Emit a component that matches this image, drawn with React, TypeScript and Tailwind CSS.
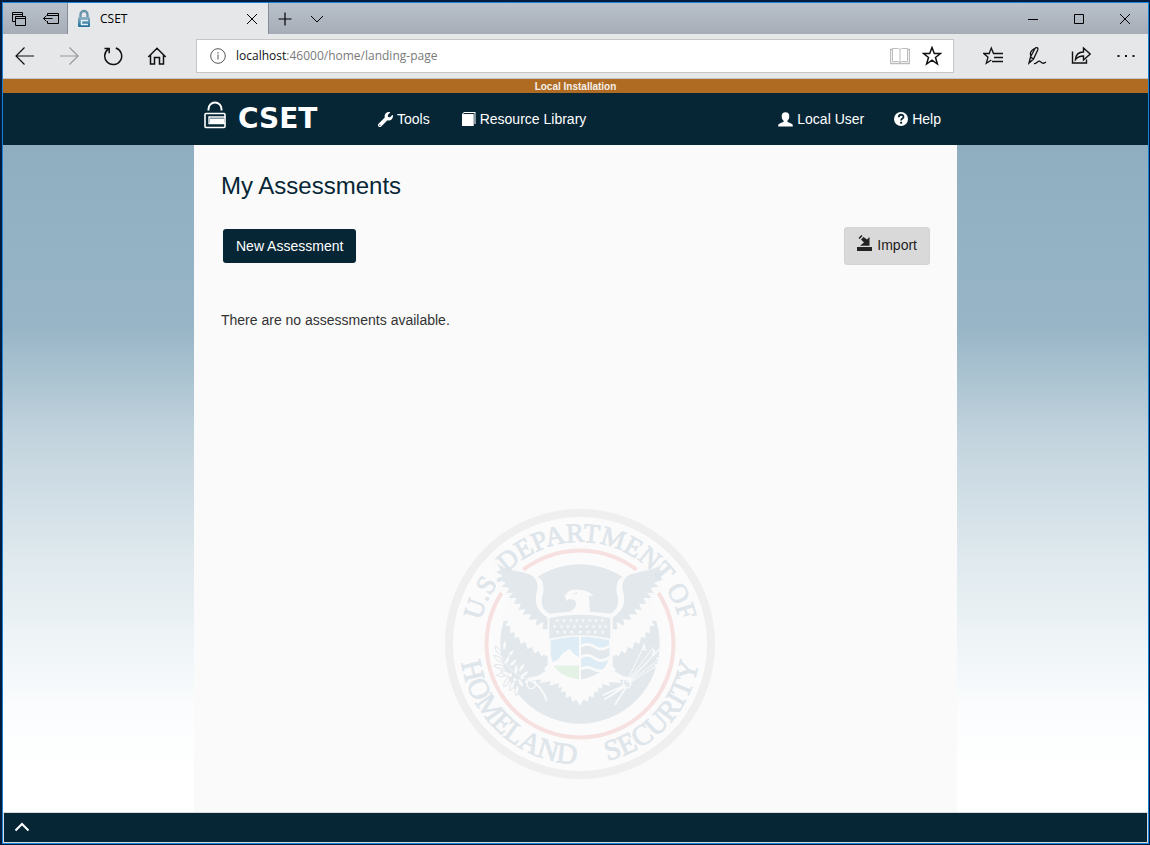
import React from "react";
import { FaWrench } from "react-icons/fa";

type IconProps = { children: React.ReactNode; size?: string; box?: string; width?: number };

function Line({ children, size = "size-5", box = "0 0 20 20", width = 1.2 }: IconProps) {
  return (
    <svg className={size} viewBox={box} fill="none" stroke="currentColor" strokeWidth={width} aria-hidden="true">
      {children}
    </svg>
  );
}

function TabStrip() {
  return (
    <div className="flex h-[31px] items-stretch bg-linear-to-b from-[#b9c1cb] to-[#a6adb6] text-black">
      <div className="flex w-[65px] shrink-0 items-center justify-between border-r border-[#858c95] pr-1.5 pl-1.5">
        <button aria-label="Tabs you've set aside">
          <Line width={1}>
            <path d="M3.500 3.500h10v9h-10zM3.500 5.500h10" />
            <path d="M6.500 7.500h10v9h-10z" fill="#b0b8c2" />
            <path d="M6.500 9.500h10" />
          </Line>
        </button>
        <button aria-label="Set these tabs aside">
          <Line width={1}>
            <path d="M6.500 7V4.500h11v10h-11V12M6.500 6.500h11M2.500 9.500h9M5.500 6.500l-3 3 3 3" />
          </Line>
        </button>
      </div>
      <div className="flex w-[200px] items-center gap-2 bg-[#e6e7e9] pr-1.5 pl-2">
        <svg className="h-5 w-4 shrink-0" viewBox="0 0 16 20" aria-hidden="true">
          <defs>
            <linearGradient id="favicon" x1="0" y1="0" x2="0" y2="1">
              <stop offset="0" stopColor="#8fb3c4" />
              <stop offset="1" stopColor="#1b6d97" />
            </linearGradient>
          </defs>
          <path d="M4.500 10V5.500a3.500 3.500 0 0 1 7 0V10" fill="none" stroke="#6a94a9" strokeWidth="2.400" />
          <rect x="2" y="8" width="12" height="10" rx="1" fill="url(#favicon)" />
          <path d="M12 11.500H5.500v4H12" fill="none" stroke="#e4f2f9" strokeWidth="1.500" />
        </svg>
        <span className="flex-1 text-[12px]">CSET</span>
        <button aria-label="Close tab">
          <Line width={1}><path d="M5 5l10 10M15 5L5 15" /></Line>
        </button>
      </div>
      <div className="flex flex-1 items-center gap-3 border-l border-[#858c95] pl-1.5">
        <button aria-label="New tab">
          <Line><path d="M10 3.500v13M3.500 10h13" /></Line>
        </button>
        <button aria-label="Show tab previews">
          <Line width={1}><path d="M4 7l6 6 6-6" /></Line>
        </button>
      </div>
      <div className="flex items-stretch">
        <button className="flex w-[46px] items-center justify-center" aria-label="Minimize">
          <Line width={1}><path d="M5 10.500h10" /></Line>
        </button>
        <button className="flex w-[46px] items-center justify-center" aria-label="Maximize">
          <Line width={1}><path d="M5.500 5.500h9v9h-9z" /></Line>
        </button>
        <button className="flex w-[46px] items-center justify-center" aria-label="Close">
          <Line width={1}><path d="M5 5l10 10M15 5L5 15" /></Line>
        </button>
      </div>
    </div>
  );
}

const starPath = "M10 1.500l2.300 6h6.200l-5 4 1.900 6.500L10 14.200 4.600 18l1.900-6.500-5-4h6.200z";

function AddressBar() {
  return (
    <div className="flex h-[45px] items-center border-b border-[#c3c5c9] bg-[#e6e7e9] text-[#111]">
      <div className="flex w-[193px] shrink-0 items-center">
        <button className="flex w-11 justify-center" aria-label="Back">
          <Line><path d="M1 10h18M9.500 1.500L1 10l8.500 8.500" /></Line>
        </button>
        <button className="flex w-11 justify-center text-[#999]" aria-label="Forward">
          <Line><path d="M1 10h18M10.500 1.500L19 10l-8.500 8.500" /></Line>
        </button>
        <button className="flex w-11 justify-center" aria-label="Refresh">
          <Line width={1.5}><path d="M5.200 3.200A8.500 8.500 0 1 0 12.800 2M1.500 2.500h4.700v4.700" /></Line>
        </button>
        <button className="flex w-11 justify-center" aria-label="Home">
          <Line width={1.5}><path d="M1.300 11L10 2.200l8.700 8.800M3.500 9.300V18h4v-6.500h5V18h4V9.300" /></Line>
        </button>
      </div>
      <div className="flex h-[34px] flex-1 items-center border border-[#c6c6c6] bg-white px-[11px]">
        <button className="mr-2 text-[#555]" aria-label="Site information">
          <Line width={1}><circle cx="10" cy="10" r="7.300" /><path d="M10 8.500v5M10 6v1.500" /></Line>
        </button>
        <label htmlFor="address" className="text-[12px]">localhost</label>
        <input
          id="address"
          className="min-w-0 flex-1 bg-transparent text-[12px] text-[#7a7a7a] outline-none"
          defaultValue=":46000/home/landing-page"
        />
        <button className="mr-3 text-[#bcbcbc]" aria-label="Reading view">
          <Line width={1}>
            <path d="M2.500 3.500h-2v14h19v-14h-2" strokeWidth="1.400" />
            <path d="M2.500 15.500V2.500h5c1.500 0 2.500.5 2.500 1.500 0-1 1-1.500 2.500-1.500h5v13h-5c-1.500 0-2.500.5-2.500 1 0-.5-1-1-2.500-1zM10 4v13" />
          </Line>
        </button>
        <button aria-label="Add to favorites">
          <Line width={1.5}><path d={starPath} /></Line>
        </button>
      </div>
      <div className="flex shrink-0 pl-[17px]">
        <button className="flex w-11 justify-center" aria-label="Favorites">
          <Line width={1.3}><path d="M14.500 7.500h-4L8.300 2 6.200 7.500H.8L5 11.300l-1.700 6L8.300 14M11 7.500h9M11 11.500h9M9 15.500h11" /></Line>
        </button>
        <button className="flex w-11 justify-center" aria-label="Add notes">
          <Line width={1.3}><path d="M2 17l1.500-6L8 2.500c1-1.800 3.500-.7 2.800 1.200L6.500 13zM4 10.500c-2-3.500 1-6.500 3.500-8M3.500 11l3 2M7 17.500c3 .5 4-4 6.500-1.800 1.500 2 3.500 2 5.500.3" /></Line>
        </button>
        <button className="flex w-11 justify-center" aria-label="Share">
          <Line width={1.4}><path d="M1.500 5.500V17h14v-3.500M4.500 13.500c.3-4.500 3-7.500 8-7.500V2l6.700 6-6.700 6v-4c-4 0-6 1-8 3.500z" /></Line>
        </button>
        <button className="flex w-[45px] justify-center" aria-label="Settings and more">
          <Line><path d="M1.500 10h2M9 10h2M16.500 10h2" strokeWidth="2" /></Line>
        </button>
      </div>
    </div>
  );
}

function SiteNav() {
  return (
    <nav className="flex h-[52px] shrink-0 justify-center bg-[#062636] text-[14px] text-white">
      <div className="flex w-full max-w-[763px] items-center pr-4 pl-2.5">
        <a href="#home" className="flex w-[174px] items-center gap-3" aria-label="CSET home">
          <svg className="mb-2 h-7 w-[22px]" viewBox="0 0 22 28" fill="none" stroke="white" aria-hidden="true">
            <path d="M4.500 9.500V8a6.500 6.500 0 0 1 13 0v1.500" strokeWidth="2" />
            <rect x="1" y="12.500" width="20" height="14" rx="1" strokeWidth="1.600" />
            <path d="M21 16H5v6.500h16" strokeWidth="1.400" />
            <rect x="6" y="17.500" width="14" height="4.500" fill="white" stroke="none" />
          </svg>
          <span className="font-['DejaVu_Sans',sans-serif] text-[28px] leading-8 font-bold">CSET</span>
        </a>
        <button className="mr-[31px] flex items-center gap-1">
          <FaWrench className="size-[15px]" />
          Tools
        </button>
        <button className="flex items-center gap-1">
          <svg className="h-4 w-[15px]" viewBox="0 0 15 16" aria-hidden="true">
            <path d="M3 1H14.500v12h-1V2H3L1.800 3.200H12.500V15H1V3z" fill="white" />
            <path d="M1 3.200h11.500V15H1z" fill="white" />
          </svg>
          Resource Library
        </button>
        <button className="mr-[30px] ml-auto flex items-center gap-1">
          <svg className="size-[15px]" viewBox="0 0 15 15" fill="white" aria-hidden="true">
            <path d="M7.500.3c2.500 0 3.800 1.500 3.800 3.900 0 2-.8 3.700-1.900 4.500v1.100c0 .6 5.400 1.600 5.400 3.400v1.300H.2v-1.300c0-1.800 5.400-2.800 5.400-3.400V8.700C4.500 7.900 3.700 6.200 3.700 4.200 3.700 1.800 5 .3 7.500.3z" />
          </svg>
          Local User
        </button>
        <button className="flex items-center gap-1">
          <svg className="size-[14px]" viewBox="0 0 14 14" aria-hidden="true">
            <circle cx="7" cy="7" r="7" fill="white" />
            <path d="M4.700 5.200c0-3.200 4.800-3.200 4.800-.3C9.500 6.600 7.100 6.600 7.100 8.500" fill="none" stroke="#062636" strokeWidth="1.800" />
            <path d="M6.100 9.700h2v2h-2z" fill="#062636" />
          </svg>
          Help
        </button>
      </div>
    </nav>
  );
}

const starRows = [
  { y: 211, xs: [232, 252, 272, 290, 309, 329, 348, 367] },
  { y: 229, xs: [224, 245, 264, 283, 302, 321, 341, 360, 377] },
  { y: 246, xs: [233, 254, 275, 301, 325, 346, 368] },
];

const leaves = [
  [74, 286, 10], [55, 302, -35], [92, 310, 40], [55, 326, -55], [82, 330, 25], [100, 338, 45],
  [58, 350, -75], [125, 353, 35], [108, 358, 5], [66, 374, -100], [134, 372, 55], [80, 396, 30],
  [97, 406, 25], [111, 420, 10], [78, 370, -60], [122, 398, -30],
];

/* Left half of the eagle's wing; the right half is its mirror image. */
function Wing() {
  return (
    <>
      <path
        fill="#fafafa"
        d="M175 82C192 92 191 115 190 128 178 160 190 185 212 192V322L190 314 186 322 176 303 163 310 156 290 142 297 137 276 121 281 117 260 104 265 103 246 90 250 91 230 76 226 86 213 67 212 66 205 84 150 58 122 36 66 30 28 118 42 133 62Z"
      />
      <path
        fill="#e2e8ec"
        d="M50 39C75 62 115 62 145 72 175 83 175 108 170 128 160 165 178 187 203 203V236L188 239 190 216 172 226 166 225 171 207 146 210 153 192 129 194 136 178 115 180 123 162 101 161 110 144 86 144 98 128 78 129 89 115 64 109 78 99 51 86 68 78 49 65 62 60Z"
      />
    </>
  );
}

function Seal() {
  return (
    <svg className="mt-auto mb-8 ml-2 w-[272px] shrink-0 self-center" viewBox="444 508 272 272" role="img" aria-label="U.S. Department of Homeland Security seal">
      <defs>
        <path id="upper-arc" d="M478 644a102 102 0 0 1 204 0" />
        <path id="lower-arc" d="M460 644a120 120 0 0 0 240 0" />
      </defs>
      <circle cx="580" cy="644" r="131" fill="#fbfbfb" stroke="#efefef" strokeWidth="8" />
      <circle cx="580" cy="644" r="93.500" fill="none" stroke="#f6e0e0" strokeWidth="4" />
      <g transform="translate(480 550) scale(.33333)">
        <circle cx="300" cy="282" r="239" fill="#e2e8ec" />
        <Wing />
        <g transform="matrix(-1 0 0 1 600 0)"><Wing /></g>
        <path
          fill="#fafafa"
          d="M255 138C260 126 275 117 295 119 315 119 330 128 342 136L326 139C330 155 327 170 330 185Q365 188 398 192V348L408 360 402 362 428 378 455 384 450 390 418 389 425 399 386 396 391 408 366 402 368 416 355 412 355 427 343 424 341 443 328 437 323 455 311 448 300 467 289 449 277 456 272 438 258 444 257 424 244 427 246 411 235 414 237 400 208 407 213 394 178 399 186 389 150 390 145 383 173 378 197 362 191 357 203 345V192Q235 188 270 185C287 177 291 161 286 152 278 147 268 146 264 149L259 153Z"
        />
        <path d="M274 132l17-5 2 4-9 2z" fill="#e2e8ec" />
        <path d="M208 204Q300 184 391 204V266Q300 246 208 266Z" fill="#e2e8ec" />
        {starRows.flatMap((row) =>
          row.xs.map((x) => (
            <path
              key={`${x}-${row.y}`}
              transform={`translate(${x} ${row.y})`}
              d="M0-6L1.500-2H6L2.500 1 4 6 0 3-4 6-2.500 1-6-2H-1.500Z"
              fill="#fafafa"
            />
          )),
        )}
        <path d="M212 271Q250 261 297 260V388C250 380 215 355 212 310Z" fill="#deecf5" />
        <path d="M216 340L238 325 247 311 269 296 282 312 297 322V347H219Z" fill="#fafafa" />
        <path d="M220 347H297V388C260 382 237 370 220 347Z" fill="#e4f2e6" />
        <path d="M303 260Q350 261 388 271V310C388 352 355 380 303 388Z" fill="#deecf5" />
        <path d="M303 290q22-11 42 3t43-3v30q-22 12-43 0t-42 0ZM303 362q20-8 34 0 12 6 25-1-23 20-59 27Z" fill="#e2e8ec" />
        <path d="M303 288q22-11 42 3t43-3M303 321q22-11 42 4t43-3M303 357q22-11 42 3 20 6 37-2" fill="none" stroke="#fafafa" strokeWidth="8" />
        <g fill="#fafafa">
          {leaves.map(([x, y, turn]) => (
            <path
              key={`${x}-${y}`}
              transform={`translate(${x} ${y}) rotate(${turn})`}
              d="M0-17Q12 2 0 17-12 2 0-17Z"
              stroke="#e2e8ec"
              strokeWidth="3"
            />
          ))}
          <circle cx="91" cy="375" r="5" />
          <circle cx="104" cy="389" r="5" />
          <circle cx="126" cy="383" r="5" />
          <circle cx="140" cy="395" r="5" />
        </g>
        <g fill="none" stroke="#fafafa" strokeLinecap="round">
          <path d="M145 388Q185 405 200 451" strokeWidth="6" />
          <path d="M66 320Q78 362 145 390" strokeWidth="2" />
          <ellipse cx="154" cy="401" rx="13" ry="15" strokeWidth="4" />
          <ellipse cx="441" cy="399" rx="11" ry="15" strokeWidth="4" />
          <path d="M440 395L492 288M442 395L520 292M445 395L544 290M446 397L535 330M448 400L528 348M452 389L556 280" strokeWidth="3" />
          <path d="M435 405L370 435M435 410L374 448M438 412L406 462M433 406L390 439" strokeWidth="5" />
          <path d="M492 284l-5 14 10 2zM521 300l-3 15 10-4zM544 290l-5 17 12-5zM556 274l-8 18 8 3zM525 345l25-8M525 355l23-3M530 325l25-6" strokeWidth="4" />
        </g>
      </g>
      <g fill="#dfe6eb" stroke="#dfe6eb" strokeWidth=".8" className="font-['Liberation_Serif',serif]">
        <text fontSize="27" textAnchor="middle"><textPath href="#upper-arc" startOffset="50%">U.S. DEPARTMENT OF</textPath></text>
        <text fontSize="29"><textPath href="#lower-arc" startOffset="5%">HOMELAND</textPath></text>
        <text fontSize="29" textAnchor="end"><textPath href="#lower-arc" startOffset="95%">SECURITY</textPath></text>
      </g>
    </svg>
  );
}

export default function App() {
  return (
    <div className="flex min-h-screen flex-col border-t-2 border-r border-b border-l-2 border-[#031c3d] font-['Liberation_Sans',Arial,sans-serif]">
      <div className="flex flex-1 flex-col border border-[#1683d8]">
        <header className="font-['Open_Sans',sans-serif]">
          <TabStrip />
          <AddressBar />
        </header>
        <div className="h-3.5 bg-[#b06b22] text-center text-[10px] leading-[15px] font-bold text-[#f5f0ea]">Local Installation</div>
        <SiteNav />
        <div className="flex flex-1 justify-center bg-[linear-gradient(#8fafc1_0%,#97b5c6_27%,#c3d4de_44%,#dfe9ee_62%,#fafcfd_84%,#ffffff_94%)]">
          <main className="flex w-full max-w-[763px] flex-col bg-[#fafafa] px-[27px] pt-[26px] text-[14px] text-[#333]">
            <h1 className="text-[24px] leading-[30px] text-[#062636]">My Assessments</h1>
            <div className="mt-[26px] flex items-center justify-between pl-0.5">
              <button className="h-[34px] rounded-[3px] bg-[#062636] px-[13px] text-white">New Assessment</button>
              <button className="flex h-[38px] items-center gap-[5px] rounded-[3px] border border-[#d3d3d3] bg-[#d9d9d9] px-3 pb-0.5 text-[#222]">
                <svg className="mb-1 h-4 w-[15px]" viewBox="0 0 15 16" fill="currentColor" aria-hidden="true">
                  <path d="M0 12h15v4H0z" />
                  <path d="M3 10.800h9.500V2L10 4.500 6.500 2 4 4.500 7 7.500z" />
                  <path d="M2 3.500l3-3" stroke="currentColor" strokeWidth="1.600" />
                </svg>
                Import
              </button>
            </div>
            <p className="mt-[45px] mb-8 leading-5">There are no assessments available.</p>
            <Seal />
          </main>
        </div>
        <footer className="flex h-[31px] shrink-0 items-center border border-[#d8dadc] bg-[#062636] pl-2 text-white">
          <button aria-label="Expand footer">
            <Line width={2}><path d="M3.500 12.500L10 6l6.500 6.500" /></Line>
          </button>
        </footer>
      </div>
    </div>
  );
}
